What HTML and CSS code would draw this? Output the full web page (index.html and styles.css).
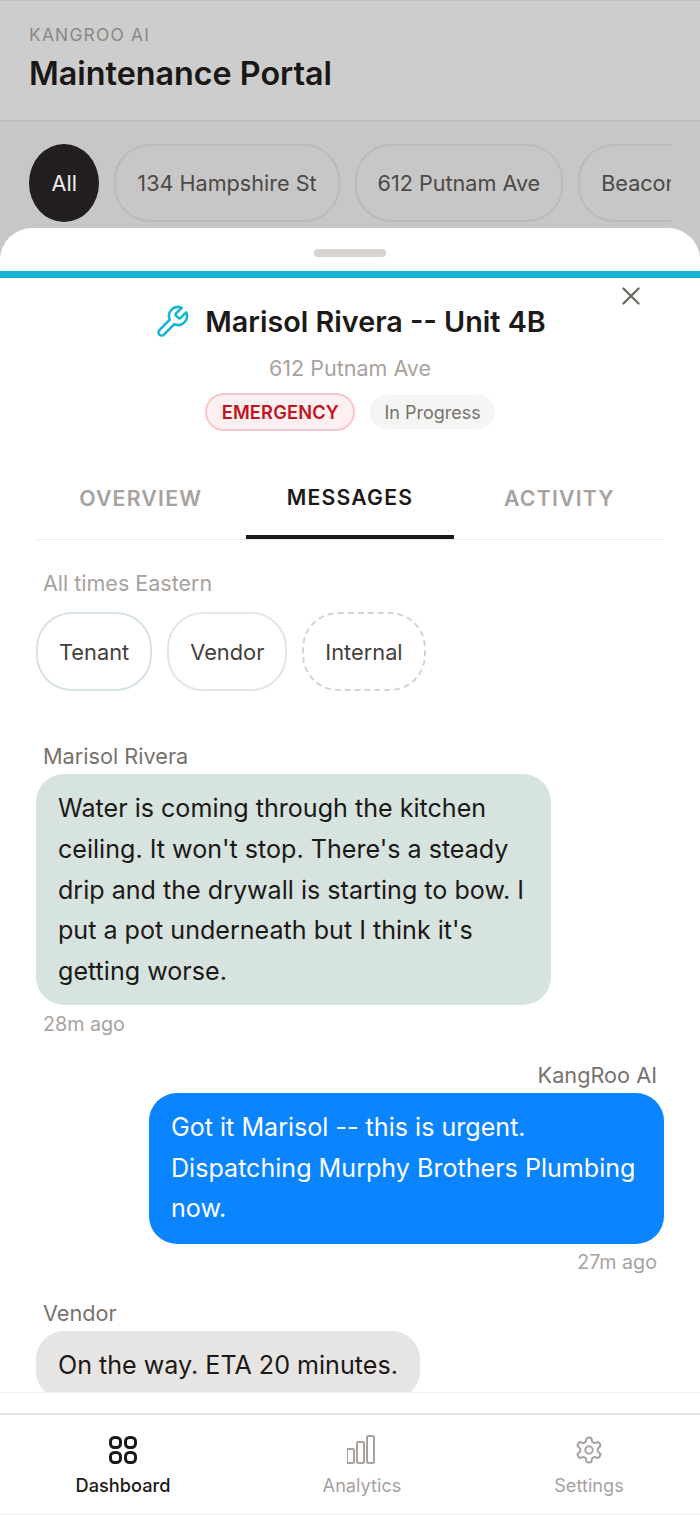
FILE: index.html
```html
<!DOCTYPE html>
<html lang="en">
<head>
  <meta charset="UTF-8" />
  <title>Maintenance Portal</title>
  <link rel="stylesheet" href="styles.css">
</head>
<body>
  <div class="app">
    <header class="top">
      <div class="brand">KANGROO AI</div>
      <h1>Maintenance Portal</h1>
    </header>
    <div class="filters">
      <div class="filter-row">
        <span class="filter active">All</span>
        <span class="filter">134 Hampshire St</span>
        <span class="filter">612 Putnam Ave</span>
        <span class="filter">Beacon Hill</span>
      </div>
    </div>

    <section class="sheet">
      <div class="handle-wrap"><div class="handle"></div></div>
      <div class="accent"></div>
      <button class="close" aria-label="Close">
        <svg viewBox="0 0 24 24" width="26" height="26" fill="none" stroke="currentColor" stroke-width="2" stroke-linecap="round"><path d="M5 5l14 14M19 5L5 19"/></svg>
      </button>

      <div class="ticket-head">
        <div class="ticket-title">
          <svg class="wrench" viewBox="0 0 24 24" width="36" height="36" fill="none" stroke="currentColor" stroke-width="1.7" stroke-linecap="round" stroke-linejoin="round"><path d="M14.7 6.3a1 1 0 0 0 0 1.4l1.6 1.6a1 1 0 0 0 1.4 0l3.77-3.77a6 6 0 0 1-7.94 7.94l-6.91 6.91a2.12 2.12 0 0 1-3-3l6.91-6.91a6 6 0 0 1 7.94-7.94l-3.76 3.76z"/></svg>
          <h2>Marisol Rivera -- Unit 4B</h2>
        </div>
        <div class="address">612 Putnam Ave</div>
        <div class="badges">
          <span class="badge emergency">EMERGENCY</span>
          <span class="badge status">In Progress</span>
        </div>
      </div>

      <nav class="tabs">
        <a class="tab">OVERVIEW</a>
        <a class="tab active">MESSAGES</a>
        <a class="tab">ACTIVITY</a>
      </nav>

      <div class="thread">
        <div class="tz">All times Eastern</div>
        <div class="channels">
          <span class="channel tenant">Tenant</span>
          <span class="channel vendor">Vendor</span>
          <span class="channel internal">Internal</span>
        </div>

        <div class="msg">
          <div class="who">Marisol Rivera</div>
          <div class="bubble from-tenant">Water is coming through the kitchen ceiling. It won't stop. There's a steady drip and the drywall is starting to bow. I put a pot underneath but I think it's getting worse.</div>
          <div class="when">28m ago</div>
        </div>

        <div class="msg mine">
          <div class="who">KangRoo AI</div>
          <div class="bubble from-ai">Got it Marisol -- this is urgent. Dispatching Murphy Brothers Plumbing now.</div>
          <div class="when">27m ago</div>
        </div>

        <div class="msg">
          <div class="who">Vendor</div>
          <div class="bubble from-vendor">On the way. ETA 20 minutes.</div>
        </div>
      </div>

      <div class="sheet-foot"></div>

      <nav class="bottom-nav">
        <a class="nav-item active">
          <svg viewBox="0 0 30 30" width="30" height="30" fill="none" stroke="currentColor" stroke-width="3"><rect x="2.5" y="2.5" width="10" height="10" rx="4"/><rect x="17.5" y="2.5" width="10" height="10" rx="4"/><rect x="2.5" y="17.5" width="10" height="10" rx="4"/><rect x="17.5" y="17.5" width="10" height="10" rx="4"/></svg>
          <span>Dashboard</span>
        </a>
        <a class="nav-item">
          <svg viewBox="1 0 30 30" width="30" height="30" fill="none" stroke="currentColor" stroke-width="2"><rect x="1" y="14" width="7" height="14" rx="1.5"/><rect x="11" y="7" width="7" height="21" rx="1.5"/><rect x="21" y="1" width="7" height="27" rx="1.5"/></svg>
          <span>Analytics</span>
        </a>
        <a class="nav-item">
          <svg viewBox="0 0 24 24" width="30" height="30" fill="none" stroke="currentColor" stroke-width="1.6" stroke-linecap="round" stroke-linejoin="round"><path d="M12.22 2h-.44a2 2 0 0 0-2 2v.18a2 2 0 0 1-1 1.73l-.43.25a2 2 0 0 1-2 0l-.15-.08a2 2 0 0 0-2.73.73l-.22.38a2 2 0 0 0 .73 2.73l.15.1a2 2 0 0 1 1 1.72v.51a2 2 0 0 1-1 1.74l-.15.09a2 2 0 0 0-.73 2.73l.22.38a2 2 0 0 0 2.73.73l.15-.08a2 2 0 0 1 2 0l.43.25a2 2 0 0 1 1 1.73V20a2 2 0 0 0 2 2h.44a2 2 0 0 0 2-2v-.18a2 2 0 0 1 1-1.73l.43-.25a2 2 0 0 1 2 0l.15.08a2 2 0 0 0 2.73-.73l.22-.39a2 2 0 0 0-.73-2.73l-.15-.08a2 2 0 0 1-1-1.74v-.5a2 2 0 0 1 1-1.74l.15-.09a2 2 0 0 0 .73-2.73l-.22-.38a2 2 0 0 0-2.73-.73l-.15.08a2 2 0 0 1-2 0l-.43-.25a2 2 0 0 1-1-1.73V4a2 2 0 0 0-2-2z"/><circle cx="12" cy="12" r="3"/></svg>
          <span>Settings</span>
        </a>
      </nav>
    </section>
  </div>
</body>
</html>
```

FILE: styles.css
```css
* { box-sizing: border-box; margin: 0; padding: 0; }
html, body { height: 100%; }
body {
  font-family: 'Inter', 'Liberation Sans', sans-serif;
  background: #c7c7c7;
  overflow: hidden;
}
.app {
  position: relative;
  width: 700px;
  height: 1515px;
  overflow: hidden;
}

/* dimmed page behind the sheet */
.top {
  height: 122px;
  padding: 24px 29px 0;
  background: #cdcdcd;
  border-top: 1px solid #c2c2c2;
  border-bottom: 2px solid #bdbdbd;
}
.brand {
  font-size: 17.4px;
  line-height: 20px;
  letter-spacing: 1.2px;
  color: #8a8784;
}
.top h1 {
  margin-top: 9px;
  font-size: 32.3px;
  line-height: 40px;
  font-weight: 600;
  color: #1a1716;
}
.filters {
  height: 106px;
  padding: 22px 29px 0;
  background: #c7c7c7;
}
.filter-row {
  display: flex;
  gap: 15px;
  width: 642px;
  overflow: hidden;
}
.filter {
  flex: none;
  height: 78px;
  padding: 0 21px;
  display: flex;
  align-items: center;
  font-size: 21.6px;
  color: #4c4946;
  border: 2px solid #bdbbb9;
  border-radius: 36px;
}
.filter.active {
  padding: 0 20.5px;
  color: #efefef;
  background: #231f20;
  border-color: #231f20;
  border-radius: 50%;
}

/* sheet */
.sheet {
  position: absolute;
  left: 0;
  right: 0;
  top: 228px;
  bottom: 0;
  display: flex;
  flex-direction: column;
  background: #fff;
  border-radius: 32px 32px 0 0;
  overflow: hidden;
}
.handle-wrap {
  flex: 0 0 43px;
  padding-top: 21px;
}
.handle {
  width: 72px;
  height: 8px;
  margin: 0 auto;
  background: #d6d3d1;
  border-radius: 4px;
}
.accent {
  flex: 0 0 7px;
  background: #14b4d4;
}
.close {
  position: absolute;
  top: 55px;
  right: 56px;
  width: 26px;
  height: 26px;
  border: none;
  background: none;
  color: #6b6560;
}
.ticket-head {
  padding-top: 22px;
  text-align: center;
}
.ticket-title {
  display: flex;
  justify-content: center;
  align-items: center;
  gap: 15px;
}
.wrench { color: #14b4d4; }
.ticket-title h2 {
  font-size: 28.75px;
  line-height: 44px;
  font-weight: 600;
  color: #1c1917;
}
.address {
  margin-top: 11px;
  font-size: 21.5px;
  line-height: 26px;
  color: #a8a29e;
}
.badges {
  display: flex;
  justify-content: center;
  align-items: center;
  gap: 15px;
  margin-top: 12px;
}
.badge {
  display: flex;
  align-items: center;
  font-size: 18px;
  border-radius: 19px;
}
.badge.emergency {
  height: 38px;
  padding: 0 14.5px;
  font-size: 18.2px;
  font-weight: 600;
  letter-spacing: 0.2px;
  color: #c1121f;
  background: #fef0f0;
  border: 2px solid #f9c6c8;
}
.badge.status {
  height: 34px;
  padding: 0 14px;
  color: #78716c;
  background: #f5f5f4;
}

.tabs {
  display: grid;
  grid-template-columns: repeat(3, 1fr);
  margin: 32px 36px 0;
  height: 77px;
  border-bottom: 1px solid #f0efee;
}
.tab {
  padding-top: 22px;
  text-align: center;
  font-size: 21.3px;
  line-height: 26px;
  font-weight: 600;
  letter-spacing: 1.2px;
  color: #a8a29e;
}
.tab.active {
  margin: 0 1px;
  padding-top: 21px;
  font-size: 21.2px;
  color: #1c1917;
  border-bottom: 4px solid #1c1917;
}

.thread {
  flex: 1;
  min-height: 0;
  padding: 30px 36px 0;
  overflow: hidden;
}
.tz {
  padding-left: 7px;
  font-size: 21.5px;
  line-height: 26px;
  color: #a8a29e;
}
.channels {
  display: flex;
  gap: 15px;
  margin-top: 16px;
}
.channel {
  height: 79px;
  padding: 0 21px;
  display: flex;
  align-items: center;
  font-size: 21.8px;
  color: #44403c;
  border: 2px solid #e7e5e4;
  border-radius: 36px;
}
.channel.tenant { border-color: #d7e3de; }
.channel.internal { border: 2px dashed #d6d3d1; }

.msg {
  margin-top: 52px;
  display: flex;
  flex-direction: column;
  align-items: flex-start;
}
.msg + .msg { margin-top: 26px; }
.who {
  padding: 0 7px;
  font-size: 21.7px;
  line-height: 26px;
  color: #78716c;
}
.bubble {
  margin-top: 5px;
  width: fit-content;
  max-width: 515px;
  padding: 14px 22px 13px;
  font-size: 25.1px;
  line-height: 40.75px;
  border-radius: 28px;
}
.from-tenant { background: #d7e3de; color: #1c1917; }
.from-ai { padding-bottom: 15px; background: #0a84ff; color: #fff; }
.from-vendor { background: #e7e5e4; color: #1c1917; }
.when {
  margin-top: 7px;
  padding: 0 7px;
  font-size: 19.7px;
  line-height: 24px;
  color: #a8a29e;
}
.msg.mine { align-items: flex-end; }
.msg.mine .when { margin-top: 6px; }

.sheet-foot {
  flex: 0 0 21px;
  background: #fff;
  border-top: 1px solid #f0efee;
}
.bottom-nav {
  flex: 0 0 102px;
  display: grid;
  grid-template-columns: 246px 232px 222px;
  padding-top: 20px;
  background: #fff;
  border-top: 2px solid #e7e5e4;
  border-bottom: 1px solid #f0efee;
}
.nav-item {
  display: flex;
  flex-direction: column;
  align-items: center;
  gap: 8px;
  font-size: 18.2px;
  line-height: 24px;
  color: #a8a29e;
}
.nav-item.active {
  color: #1c1917;
  font-weight: 500;
}
```
